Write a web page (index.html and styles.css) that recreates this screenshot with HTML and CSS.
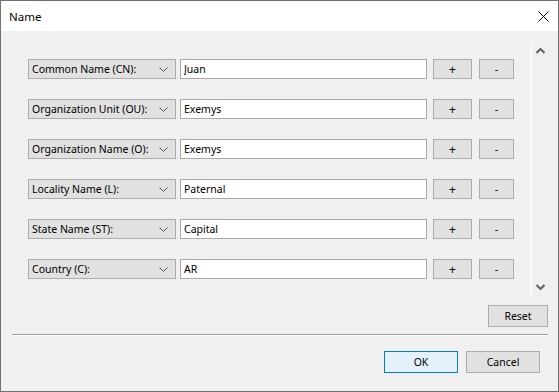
FILE: index.html
```html
<!DOCTYPE html>
<html lang="en">
<head>
  <meta charset="UTF-8">
  <title>Name</title>
  <link rel="stylesheet" href="styles.css">
</head>
<body>
  <div class="window">
    <div class="titlebar">
      <span class="title">Name</span>
      <svg class="close" width="11" height="11" viewBox="0 0 11 11">
        <path d="M0.5 0.5 L10.5 10.5 M10.5 0.5 L0.5 10.5" stroke="#000" stroke-width="1" fill="none"/>
      </svg>
    </div>

    <div class="content">
      <div class="panel">
        <div class="rows" id="rows"></div>
        <div class="scrollbar">
          <svg width="9" height="6" viewBox="0 0 9 6"><path d="M0.5 5 L4.5 1 L8.5 5" stroke="#606060" stroke-width="2" fill="none"/></svg>
          <svg width="9" height="6" viewBox="0 0 9 6"><path d="M0.5 1 L4.5 5 L8.5 1" stroke="#606060" stroke-width="2" fill="none"/></svg>
        </div>
      </div>

      <div class="reset-row">
        <button class="btn reset">Reset</button>
      </div>

      <div class="separator"></div>

      <div class="footer">
        <button class="btn ok">OK</button>
        <button class="btn cancel">Cancel</button>
      </div>
    </div>
  </div>

  <script>
    const fields = [
      ["Common Name (CN):", "Juan"],
      ["Organization Unit (OU):", "Exemys"],
      ["Organization Name (O):", "Exemys"],
      ["Locality Name (L):", "Paternal"],
      ["State Name (ST):", "Capital"],
      ["Country (C):", "AR"]
    ];

    const rows = document.getElementById('rows');

    fields.forEach(([label, value]) => {
      const row = document.createElement('div');
      row.className = 'row';
      row.innerHTML =
        '<div class="combo"><span>' + label + '</span>' +
        '<svg width="9" height="5" viewBox="0 0 9 5"><path d="M0.5 0.5 L4.5 4.5 L8.5 0.5" stroke="#505050" stroke-width="1" fill="none"/></svg></div>' +
        '<input class="field" type="text" value="' + value + '">' +
        '<button class="btn plus">+</button>' +
        '<button class="btn minus">-</button>';
      rows.appendChild(row);
    });
  </script>
</body>
</html>
```

FILE: styles.css
```css
* { box-sizing: border-box; }
body { margin: 0; font-family: "Noto Sans", sans-serif; font-size: 10.5px; color: #000; }

.window { width: 559px; height: 392px; border: 1px solid #707070; background: #f0f0f0; display: flex; flex-direction: column; }
.titlebar { height: 30px; background: #fff; display: flex; align-items: center; justify-content: space-between; padding: 0 9px 0 8px; flex-shrink: 0; }
.title { font-size: 11.5px; }
.close { display: block; }

.content { display: flex; flex-direction: column; padding: 0 10px 0 11px; }

.panel { margin-top: 11px; height: 255px; display: flex; }
.rows { flex: 1; padding: 17px 0 0 16px; display: flex; flex-direction: column; gap: 20px; }
.row { display: flex; height: 20px; }
.scrollbar { width: 17px; border-left: 1px solid #fff; display: flex; flex-direction: column; justify-content: space-between; align-items: center; padding: 6px 0 7px; }
.scrollbar svg { display: block; }

.combo { width: 148px; height: 20px; border: 1px solid #adadad; background: #e1e1e1; display: flex; align-items: center; justify-content: space-between; padding: 0 7px 0 3px; }
.combo svg { display: block; }
.field { width: 247px; height: 20px; margin-left: 4px; border: 1px solid #a9a9a9; background: #fff; font: inherit; padding: 0 3px; outline: none; }

.btn { font: inherit; color: #000; border: 1px solid #adadad; background: #e1e1e1; padding: 0; height: 20px; }
.plus { width: 39px; margin-left: 6px; font-size: 12px; }
.minus { width: 35px; margin-left: 7px; }

.reset-row { display: flex; justify-content: flex-end; margin-top: 8px; }
.reset { width: 60px; height: 22px; }

.separator { margin-top: 7px; border-top: 1px solid #a0a0a0; border-bottom: 1px solid #fff; }

.footer { display: flex; justify-content: flex-end; gap: 8px; margin-top: 15px; padding-right: 8px; }
.ok, .cancel { width: 74px; height: 22px; }
.ok { border-color: #0078d7; background: #e5f1fb; }
```
